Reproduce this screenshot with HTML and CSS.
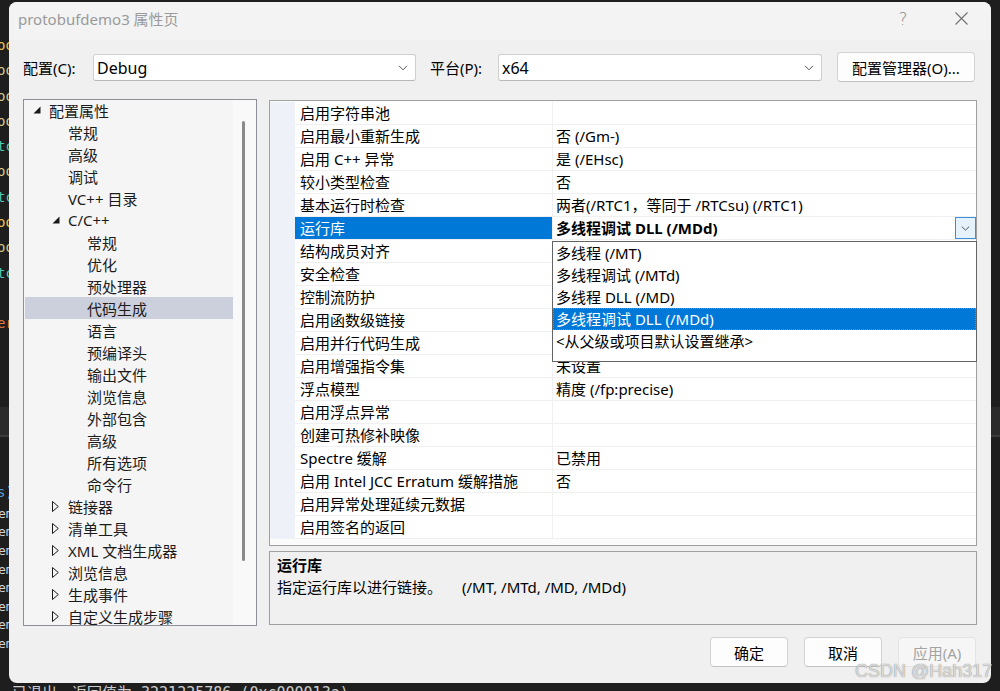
FILE: index.html
```html
<!DOCTYPE html>
<html lang="zh-CN">
<head>
<meta charset="utf-8">
<title>protobufdemo3 属性页</title>
<link rel="stylesheet" href="styles.css">
</head>
<body>
<div class="desktop">
  <div class="editor">
    <div class="code">
      <div class="cl y">oo</div>
      <div class="cl w">oo</div>
      <div class="cl w">oo</div>
      <div class="cl w">oo</div>
      <div class="cl g">tc</div>
      <div class="cl w">oo</div>
      <div class="cl g">tc</div>
      <div class="cl y">oo</div>
      <div class="cl w">oo</div>
      <div class="cl g">tc</div>
      <div class="cl w"></div>
      <div class="cl o">er</div>
      <div class="band"></div>
      <div class="cl b">s)</div>
      <div class="cs">em</div>
      <div class="cs">em</div>
      <div class="cs">em</div>
      <div class="cs">em</div>
      <div class="cs">em</div>
      <div class="cs">em</div>
      <div class="cs">em</div>
      <div class="cs">em</div>
    </div>
    <div class="output">已退出，返回值为 3221225786 (0xc000013a)。</div>
  </div>

  <div class="dialog">
    <div class="titlebar">
      <span class="title">protobufdemo3 属性页</span>
      <span class="tb-btn tb-help">?</span>
      <span class="tb-btn tb-close">
        <svg width="13" height="13" viewBox="0 0 13 13"><path d="M0.5 0.5L12.5 12.5M12.5 0.5L0.5 12.5" stroke="#6f6f6f" stroke-width="1.1" fill="none"/></svg>
      </span>
    </div>

    <div class="config-row">
      <span class="lbl lbl1">配置(C):</span>
      <div class="combo combo1">
        <span>Debug</span>
        <svg width="10" height="6" viewBox="0 0 10 6"><path d="M1 0.8L5 4.8L9 0.8" stroke="#555" stroke-width="1" fill="none"/></svg>
      </div>
      <span class="lbl lbl2">平台(P):</span>
      <div class="combo combo2">
        <span>x64</span>
        <svg width="10" height="6" viewBox="0 0 10 6"><path d="M1 0.8L5 4.8L9 0.8" stroke="#555" stroke-width="1" fill="none"/></svg>
      </div>
      <button class="btn btn-cfg">配置管理器(O)...</button>
    </div>

    <div class="main">
      <div class="tree">
        <div class="tree-list">
          <div class="tr l0"><span class="arw"><svg width="8" height="8" viewBox="0 0 8 8"><polygon points="7.5,0.5 7.5,7.5 0.5,7.5" fill="#1a1a1a"/></svg></span>配置属性</div>
          <div class="tr l2n">常规</div>
          <div class="tr l2n">高级</div>
          <div class="tr l2n">调试</div>
          <div class="tr l2n">VC++ 目录</div>
          <div class="tr l1"><span class="arw"><svg width="8" height="8" viewBox="0 0 8 8"><polygon points="7.5,0.5 7.5,7.5 0.5,7.5" fill="#1a1a1a"/></svg></span>C/C++</div>
          <div class="tr l3n">常规</div>
          <div class="tr l3n">优化</div>
          <div class="tr l3n">预处理器</div>
          <div class="tr l3n sel">代码生成</div>
          <div class="tr l3n">语言</div>
          <div class="tr l3n">预编译头</div>
          <div class="tr l3n">输出文件</div>
          <div class="tr l3n">浏览信息</div>
          <div class="tr l3n">外部包含</div>
          <div class="tr l3n">高级</div>
          <div class="tr l3n">所有选项</div>
          <div class="tr l3n">命令行</div>
          <div class="tr l1"><span class="arw"><svg width="7" height="11" viewBox="0 0 7 11"><polygon points="0.5,0.5 6.3,5.5 0.5,10.5" fill="none" stroke="#1a1a1a" stroke-width="1"/></svg></span>链接器</div>
          <div class="tr l1"><span class="arw"><svg width="7" height="11" viewBox="0 0 7 11"><polygon points="0.5,0.5 6.3,5.5 0.5,10.5" fill="none" stroke="#1a1a1a" stroke-width="1"/></svg></span>清单工具</div>
          <div class="tr l1"><span class="arw"><svg width="7" height="11" viewBox="0 0 7 11"><polygon points="0.5,0.5 6.3,5.5 0.5,10.5" fill="none" stroke="#1a1a1a" stroke-width="1"/></svg></span>XML 文档生成器</div>
          <div class="tr l1"><span class="arw"><svg width="7" height="11" viewBox="0 0 7 11"><polygon points="0.5,0.5 6.3,5.5 0.5,10.5" fill="none" stroke="#1a1a1a" stroke-width="1"/></svg></span>浏览信息</div>
          <div class="tr l1"><span class="arw"><svg width="7" height="11" viewBox="0 0 7 11"><polygon points="0.5,0.5 6.3,5.5 0.5,10.5" fill="none" stroke="#1a1a1a" stroke-width="1"/></svg></span>生成事件</div>
          <div class="tr l1"><span class="arw"><svg width="7" height="11" viewBox="0 0 7 11"><polygon points="0.5,0.5 6.3,5.5 0.5,10.5" fill="none" stroke="#1a1a1a" stroke-width="1"/></svg></span>自定义生成步骤</div>
        </div>
        <div class="vscroll"><div class="thumb"></div></div>
      </div>

      <div class="right">
        <div class="grid">
          <div class="row"><div class="gut"></div><div class="name">启用字符串池</div><div class="val"></div></div>
          <div class="row"><div class="gut"></div><div class="name">启用最小重新生成</div><div class="val">否 (/Gm-)</div></div>
          <div class="row"><div class="gut"></div><div class="name">启用 C++ 异常</div><div class="val">是 (/EHsc)</div></div>
          <div class="row"><div class="gut"></div><div class="name">较小类型检查</div><div class="val">否</div></div>
          <div class="row"><div class="gut"></div><div class="name">基本运行时检查</div><div class="val">两者(/RTC1，等同于 /RTCsu) (/RTC1)</div></div>
          <div class="row row-sel"><div class="gut"></div><div class="name">运行库</div><div class="val"><span class="val-text">多线程调试 DLL (/MDd)</span><span class="dd-btn"><svg width="9" height="5" viewBox="0 0 9 5"><path d="M0.8 0.6L4.5 4.2L8.2 0.6" stroke="#555" stroke-width="1" fill="none"/></svg></span></div></div>
          <div class="row"><div class="gut"></div><div class="name">结构成员对齐</div><div class="val"></div></div>
          <div class="row"><div class="gut"></div><div class="name">安全检查</div><div class="val"></div></div>
          <div class="row"><div class="gut"></div><div class="name">控制流防护</div><div class="val"></div></div>
          <div class="row"><div class="gut"></div><div class="name">启用函数级链接</div><div class="val"></div></div>
          <div class="row"><div class="gut"></div><div class="name">启用并行代码生成</div><div class="val"></div></div>
          <div class="row"><div class="gut"></div><div class="name">启用增强指令集</div><div class="val">未设置</div></div>
          <div class="row"><div class="gut"></div><div class="name">浮点模型</div><div class="val">精度 (/fp:precise)</div></div>
          <div class="row"><div class="gut"></div><div class="name">启用浮点异常</div><div class="val"></div></div>
          <div class="row"><div class="gut"></div><div class="name">创建可热修补映像</div><div class="val"></div></div>
          <div class="row"><div class="gut"></div><div class="name">Spectre 缓解</div><div class="val">已禁用</div></div>
          <div class="row"><div class="gut"></div><div class="name">启用 Intel JCC Erratum 缓解措施</div><div class="val">否</div></div>
          <div class="row"><div class="gut"></div><div class="name">启用异常处理延续元数据</div><div class="val"></div></div>
          <div class="row"><div class="gut"></div><div class="name">启用签名的返回</div><div class="val"></div></div>

          <div class="dropdown">
            <div class="opt">多线程 (/MT)</div>
            <div class="opt">多线程调试 (/MTd)</div>
            <div class="opt">多线程 DLL (/MD)</div>
            <div class="opt opt-sel">多线程调试 DLL (/MDd)</div>
            <div class="opt">&lt;从父级或项目默认设置继承&gt;</div>
          </div>
        </div>

        <div class="desc">
          <div class="desc-title">运行库</div>
          <div class="desc-text"><span>指定运行库以进行链接。</span><span class="desc-opts">(/MT, /MTd, /MD, /MDd)</span></div>
        </div>
      </div>
    </div>

    <div class="footer">
      <button class="btn btn-ok">确定</button>
      <button class="btn btn-cancel">取消</button>
      <button class="btn btn-apply" disabled>应用(A)</button>
    </div>
  </div>

  <div class="watermark">CSDN @Hah317</div>
</div>
</body>
</html>
```

FILE: styles.css
```css
* {
  box-sizing: border-box;
}

html, body {
  margin: 0;
  padding: 0;
}

body {
  width: 1000px;
  height: 691px;
  overflow: hidden;
  background: #1e1e1e;
  font-family: "Noto Sans", "Noto Sans CJK SC", sans-serif;
}

.desktop {
  position: relative;
  width: 1000px;
  height: 691px;
}

/* background editor */
.editor {
  display: flex;
  flex-direction: column;
  height: 691px;
}

.code {
  height: 684px;
  flex-shrink: 0;
  padding-top: 33px;
  font-family: "DejaVu Sans Mono", "Noto Sans CJK SC", monospace;
  font-size: 14px;
  overflow: hidden;
}

.cl {
  height: 25.3px;
  line-height: 25px;
  margin-left: -3px;
  white-space: nowrap;
}

.cl.y { color: #e8c64a; }
.cl.w { color: #d7c98a; }
.cl.g { color: #4ec9b0; }
.cl.o { color: #e07a3f; }
.cl.b { color: #569cd6; margin-top: 43px; }

.band {
  height: 30px;
  margin-top: 70px;
  background: #2b2b2b;
  border-bottom: 2px solid #3a3a3a;
}

.cs {
  height: 18.6px;
  line-height: 18px;
  color: #d4d4d4;
  font-size: 13px;
  margin-left: -2px;
}

.output {
  padding-left: 12px;
  color: #cccccc;
  font-size: 15px;
  line-height: 18px;
  white-space: nowrap;
  font-family: "DejaVu Sans Mono", "Noto Sans CJK SC", monospace;
}

/* dialog window */
.dialog {
  position: absolute;
  left: 9px;
  top: 2px;
  width: 982px;
  height: 681px;
  background: #f0f0f0;
  border-radius: 8px;
  padding: 0 14px;
  display: flex;
  flex-direction: column;
  color: #000;
  font-size: 15px;
}

.titlebar {
  height: 38px;
  margin: 0 -14px;
  padding-left: 9px;
  padding-bottom: 5px;
  display: flex;
  align-items: center;
  background: #f3f3f3;
  border-radius: 8px 8px 0 0;
}

.title {
  flex: 1;
  color: #9a9a9a;
  font-size: 15px;
  white-space: nowrap;
}

.tb-btn {
  height: 33px;
  display: flex;
  align-items: center;
  justify-content: center;
}

.tb-help {
  width: 56px;
  color: #8a8a8a;
  font-size: 17px;
  font-family: "DejaVu Sans", sans-serif;
  font-weight: 300;
}

.tb-close {
  width: 60px;
}

/* configuration row */
.config-row {
  display: flex;
  align-items: center;
  height: 30px;
  margin-top: 12px;
}

.lbl {
  white-space: nowrap;
}

.lbl1 {
  width: 70px;
}

.lbl2 {
  width: 68px;
  margin-left: 14px;
}

.combo {
  height: 27px;
  background: #fff;
  border: 1px solid #cfcfcf;
  border-bottom-color: #b8b8b8;
  border-radius: 3px;
  display: flex;
  align-items: center;
  justify-content: space-between;
  padding: 1px 7px 0 3px;
  font-size: 16px;
}

.combo1 {
  width: 323px;
}

.combo2 {
  width: 324px;
}

.btn {
  height: 30px;
  background: #fdfdfd;
  border: 1px solid #d2d2d2;
  border-bottom-color: #c2c2c2;
  border-radius: 4px;
  font-family: inherit;
  font-size: 15px;
  color: #000;
  padding: 0;
}

.btn-cfg {
  width: 138px;
  margin-left: 15px;
}

/* main area */
.main {
  display: flex;
  gap: 12px;
  margin-top: 17px;
  height: 527px;
}

.tree {
  width: 234px;
  height: 527px;
  border: 1px solid #8d8f99;
  background: #f5f5f5;
  display: flex;
  overflow: hidden;
}

.tree-list {
  width: 209px;
  padding-left: 1px;
  margin-top: -1px;
}

.tr {
  height: 22px;
  display: flex;
  align-items: center;
  white-space: nowrap;
  color: #1b1b1b;
}

.tr.sel {
  background: #cccfdc;
}

.arw {
  width: 16px;
  display: flex;
  align-items: center;
}

.l0 { padding-left: 8px; }
.l1 { padding-left: 27px; }
.l2n { padding-left: 43px; }
.l3n { padding-left: 62px; }

.vscroll {
  width: 23px;
  background: #f9f9f9;
  padding-top: 21px;
  padding-left: 9px;
}

.thumb {
  width: 3px;
  height: 440px;
  background: #8a8a8a;
  border-radius: 2px;
}

/* right side */
.right {
  width: 708px;
  display: flex;
  flex-direction: column;
  gap: 5px;
  padding-top: 1px;
}

.grid {
  position: relative;
  height: 446px;
  border: 1px solid #a0a0a0;
  background: #fbfbfb;
  padding-top: 1px;
}

.row {
  display: flex;
  height: 23px;
}

.gut {
  width: 25px;
  background: #eef2f8;
}

.name {
  width: 258px;
  padding-left: 5px;
  line-height: 22px;
  background: #fff;
  border-bottom: 1px solid #f0f0f0;
  border-right: 1px solid #f0f0f0;
  white-space: nowrap;
}

.val {
  flex: 1;
  padding-left: 3px;
  line-height: 22px;
  background: #fff;
  border-bottom: 1px solid #f0f0f0;
  white-space: nowrap;
  display: flex;
  align-items: flex-start;
}

.row-sel .name {
  background: #0078d7;
  color: #fff;
}

.val-text {
  flex: 1;
  font-weight: bold;
}

.dd-btn {
  width: 21px;
  height: 22px;
  border: 1px solid #3b8ed8;
  background: #e5f1fb;
  display: flex;
  align-items: center;
  justify-content: center;
}

.dropdown {
  position: absolute;
  left: 282px;
  top: 140px;
  width: 425px;
  height: 121px;
  background: #fff;
  border: 1px solid #646464;
}

.opt {
  height: 22px;
  line-height: 22px;
  padding-left: 3px;
  white-space: nowrap;
}

.opt-sel {
  background: #0078d7;
  color: #fff;
  outline: 1px dotted #c9741f;
  outline-offset: -1px;
}

.desc {
  height: 74px;
  border: 1px solid #a0a0a0;
  background: #f0f0f0;
  padding: 2px 7px;
}

.desc-title {
  font-weight: bold;
  line-height: 22px;
}

.desc-text {
  line-height: 22px;
  white-space: nowrap;
}

.desc-opts {
  margin-left: 20px;
}

/* footer */
.footer {
  display: flex;
  justify-content: flex-end;
  gap: 16px;
  margin-top: 11px;
  padding-right: 1px;
}

.btn-ok,
.btn-cancel {
  width: 78px;
}

.btn-apply {
  width: 78px;
  background: #f6f6f6;
  border-color: #e4e4e4;
  color: #a3a3a3;
}

.watermark {
  position: absolute;
  left: 855px;
  top: 661px;
  font-family: "Liberation Sans", sans-serif;
  font-size: 18px;
  color: rgba(235, 235, 235, 0.85);
  text-shadow: 0 0 1px rgba(90, 90, 90, 0.9);
  white-space: nowrap;
}
```
